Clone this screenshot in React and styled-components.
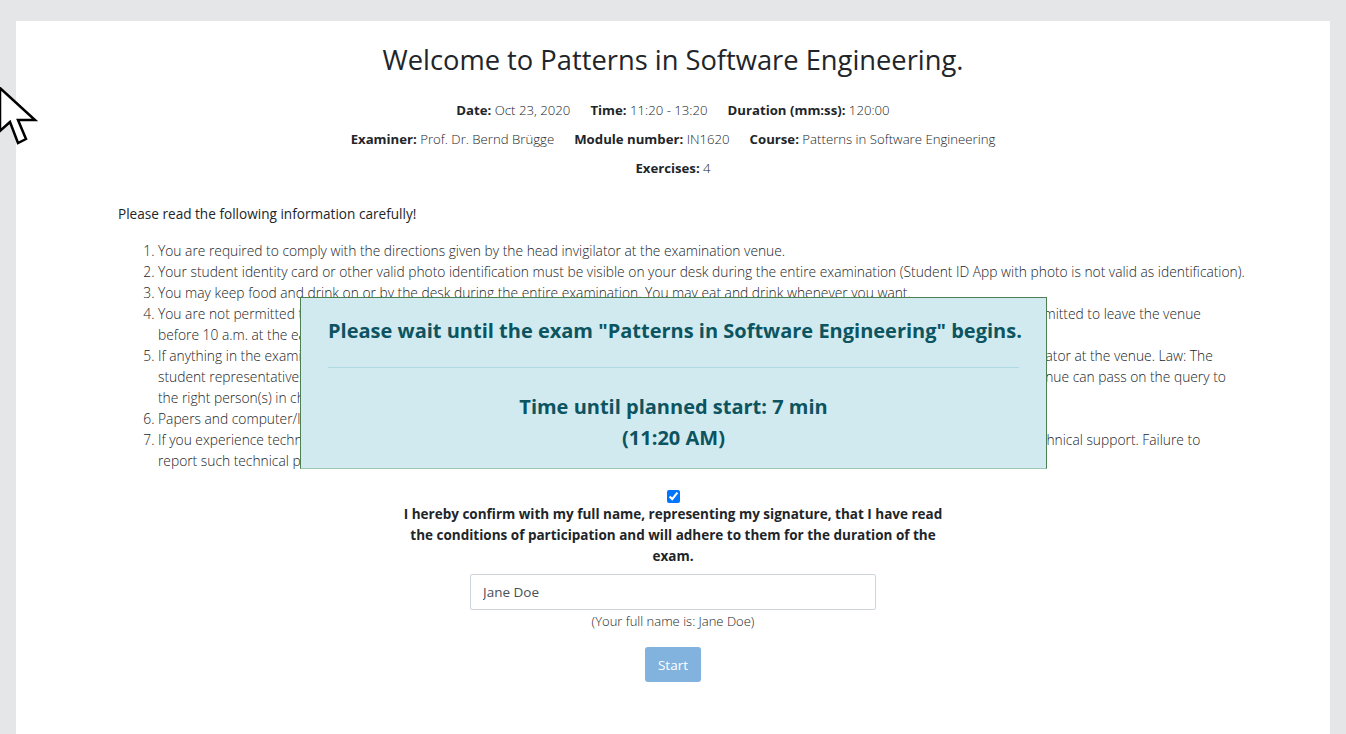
import React from "react";
import styled, { createGlobalStyle } from "styled-components";

const GlobalStyle = createGlobalStyle`
  html, body { margin: 0; padding: 0; }
  body {
    background: #e5e6e8;
    font-family: "Open Sans", "Noto Sans", sans-serif;
    color: #212529;
    font-size: 13.5px;
  }
`;

const Page = styled.div`
  padding: 21px 16px 0;
  min-height: 713px;
`;

const Card = styled.main`
  position: relative;
  background: #ffffff;
  min-height: 713px;
  padding: 22px 102px 0;
  box-sizing: border-box;
`;

const Title = styled.h3`
  margin: 0 0 23px;
  text-align: center;
  font-size: 27.3px;
  font-weight: 400;
  line-height: 34px;
  color: #212529;
`;

const InfoRow = styled.div`
  display: flex;
  justify-content: center;
  gap: 20px;
  line-height: 21px;
  margin-bottom: 8px;
  font-size: 13.2px;
`;

const Info = styled.span`
  font-weight: 300;
  b { font-weight: 700; }
`;

const Intro = styled.p`
  margin: 24px 0 16px;
  line-height: 21px;
  font-size: 13.6px;
  font-weight: 400;
`;

const Rules = styled.ol`
  margin: 0;
  padding-left: 40px;
  font-weight: 300;
  font-size: 13.8px;
  line-height: 21px;
  white-space: nowrap;
`;

const Confirm = styled.div`
  display: flex;
  flex-direction: column;
  align-items: center;
  margin-top: 19px;
`;

const Check = styled.input`
  width: 13px;
  height: 13px;
  margin: 0 0 1px;
`;

const ConfirmText = styled.label`
  width: 556px;
  text-align: center;
  font-weight: 700;
  font-size: 13.5px;
  line-height: 21px;
`;

const NameInput = styled.input`
  margin-top: 7px;
  width: 406px;
  height: 36px;
  box-sizing: border-box;
  border: 1px solid #ced4da;
  border-radius: 2px;
  padding: 0 12px;
  font-family: inherit;
  font-size: 13.5px;
  color: #495057;
  outline: none;
`;

const Hint = styled.div`
  margin-top: 1px;
  font-weight: 300;
  font-size: 13px;
  line-height: 20px;
  color: #212529;
`;

const StartButton = styled.button`
  margin-top: 16px;
  width: 56px;
  height: 35px;
  border: none;
  border-radius: 3px;
  background: #82b3df;
  color: #ffffff;
  font-family: inherit;
  font-size: 13.5px;
`;

const Overlay = styled.div`
  position: absolute;
  left: 284px;
  top: 276px;
  width: 747px;
  height: 172px;
  box-sizing: border-box;
  background: #d1eaf0;
  border: 1px solid #4e7f52;
  border-bottom-color: #9cc7b0;
  color: #0c5460;
  padding: 20px 27px 0;
  text-align: center;
  font-weight: 700;
`;

const WaitTitle = styled.div`
  font-size: 20px;
  line-height: 26px;
  white-space: nowrap;
`;

const Divider = styled.hr`
  margin: 23px 0 23px;
  border: 0;
  border-top: 1px solid #b0d9e2;
`;

const Countdown = styled.div`
  font-size: 20px;
  line-height: 31px;
`;

const Cursor = styled.svg`
  position: fixed;
  left: -3px;
  top: 87px;
  width: 42px;
  height: 60px;
  pointer-events: none;
`;

export default function App() {
  return (
    <>
      <GlobalStyle />
      <Page>
        <Card>
          <Title>Welcome to Patterns in Software Engineering.</Title>
          <InfoRow>
            <Info><b>Date:</b> Oct 23, 2020</Info>
            <Info><b>Time:</b> 11:20 - 13:20</Info>
            <Info><b>Duration (mm:ss):</b> 120:00</Info>
          </InfoRow>
          <InfoRow>
            <Info><b>Examiner:</b> Prof. Dr. Bernd Brügge</Info>
            <Info><b>Module number:</b> IN1620</Info>
            <Info><b>Course:</b> Patterns in Software Engineering</Info>
          </InfoRow>
          <InfoRow>
            <Info><b>Exercises:</b> 4</Info>
          </InfoRow>
          <Intro>Please read the following information carefully!</Intro>
          <Rules>
            <li>You are required to comply with the directions given by the head invigilator at the examination venue.</li>
            <li>Your student identity card or other valid photo identification must be visible on your desk during the entire examination (Student ID App with photo is not valid as identification).</li>
            <li>You may keep food and drink on or by the desk during the entire examination. You may eat and drink whenever you want.</li>
            <li>You are not permitted to leave the examination room during the first 30 minutes and in the last 15 minutes of the examination. You are not permitted to leave the venue<br />before 10 a.m. at the earliest.</li>
            <li>If anything in the examination papers is unclear to you or if you have any questions, please immediately contact the head invigilator or the invigilator at the venue. Law: The<br />student representatives are not permitted to answer any questions regarding the content of the examination. Only the head invigilator at the venue can pass on the query to<br />the right person(s) in charge.</li>
            <li>Papers and computer/laptop must remain on the desk at all times during the examination.</li>
            <li>If you experience technical problems during the examination, you must inform the head invigilator at the venue immediately and contact the technical support. Failure to<br />report such technical problems immediately may result in the exam not being graded.</li>
          </Rules>
          <Confirm>
            <Check type="checkbox" defaultChecked />
            <ConfirmText>
              I hereby confirm with my full name, representing my signature, that I have read the conditions of participation and will adhere to them for the duration of the exam.
            </ConfirmText>
            <NameInput defaultValue="Jane Doe" />
            <Hint>(Your full name is: Jane Doe)</Hint>
            <StartButton disabled>Start</StartButton>
          </Confirm>
          <Overlay>
            <WaitTitle>Please wait until the exam "Patterns in Software Engineering" begins.</WaitTitle>
            <Divider />
            <Countdown>Time until planned start: 7 min</Countdown>
            <Countdown>(11:20 AM)</Countdown>
          </Overlay>
        </Card>
      </Page>
      <Cursor viewBox="0 0 42 60">
        <path d="M3 1 L3 44 L13 35 L21 56 L29 52 L21 33 L38 33 Z" fill="#fff" stroke="#000" strokeWidth="2.5" strokeLinejoin="miter" />
      </Cursor>
    </>
  );
}
